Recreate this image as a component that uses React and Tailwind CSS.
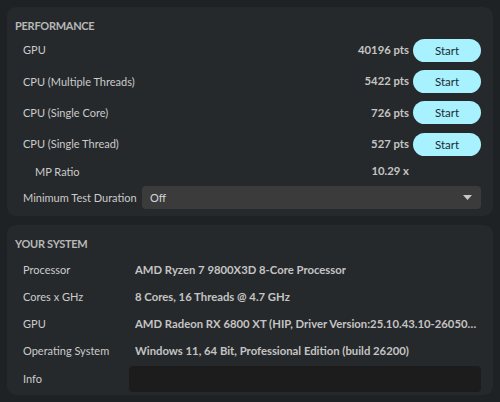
import React from "react";

const benchmarks = [
  { label: "GPU", score: "40196 pts" },
  { label: "CPU (Multiple Threads)", score: "5422 pts" },
  { label: "CPU (Single Core)", score: "726 pts" },
  { label: "CPU (Single Thread)", score: "527 pts" },
];

const system = [
  { label: "Processor", value: "AMD Ryzen 7 9800X3D 8-Core Processor" },
  { label: "Cores x GHz", value: "8 Cores, 16 Threads @ 4.7 GHz" },
  {
    label: "GPU",
    value: "AMD Radeon RX 6800 XT (HIP, Driver Version:25.10.43.10-2605061519)",
  },
  {
    label: "Operating System",
    value: "Windows 11, 64 Bit, Professional Edition (build 26200)",
  },
];

const SectionTitle = ({ children }) => (
  <h2 className="text-[11px] font-bold uppercase text-[#b8b8b8] tracking-tight leading-none">
    {children}
  </h2>
);

export default function App() {
  return (
    <div
      className="w-[500px] h-[402px] bg-[#1f2224] p-[7px] flex flex-col gap-[9px] text-[11px] text-[#cbcbcb]"
      style={{ fontFamily: "Lato, 'Noto Sans', sans-serif" }}
    >
      <section className="h-[209px] rounded-[9px] bg-[#26292b] pl-2 pr-3 pt-[13px]">
        <SectionTitle>Performance</SectionTitle>
        <div className="mt-[4px] flex flex-col">
          {benchmarks.map((b) => (
            <div key={b.label} className="flex items-center h-[31.2px] pl-2">
              <span className="flex-1 whitespace-nowrap">{b.label}</span>
              <span className="font-bold text-[11.3px] text-[#c4c4c4] mr-[4px]">{b.score}</span>
              <button className="w-[68px] h-[23px] rounded-full bg-[#a8f1ff] text-[#1e2a30] text-[11.5px]">
                Start
              </button>
            </div>
          ))}
          <div className="flex items-center h-[24px] pl-5">
            <span className="flex-1">MP Ratio</span>
            <span className="font-bold text-[11.3px] text-[#c4c4c4] mr-[72px]">10.29 x</span>
          </div>
          <div className="flex items-center h-[28px] pl-2">
            <span className="w-[119px] shrink-0 whitespace-nowrap">Minimum Test Duration</span>
            <div className="flex-1 h-[23px] rounded-[4px] bg-[#3b3b3b] flex items-center px-2">
              <span className="flex-1 text-[#d6d6d6]">Off</span>
              <svg width="9" height="5" viewBox="0 0 9 5" className="mr-[1px]">
                <path d="M0 0h9L4.5 5z" fill="#c8c8c8" />
              </svg>
            </div>
          </div>
        </div>
      </section>

      <section className="flex-1 rounded-[9px] bg-[#26292b] pl-2 pr-3 pt-[13px]">
        <SectionTitle>Your System</SectionTitle>
        <div className="mt-[8px] flex flex-col">
          {system.map((s) => (
            <div key={s.label} className="flex items-center h-[27px] pl-2">
              <span className="w-[112px] shrink-0">{s.label}</span>
              <span className="font-bold text-[11.3px] text-[#c4c4c4] truncate">{s.value}</span>
            </div>
          ))}
          <div className="flex items-center h-[28px] pl-2">
            <span className="w-[106px] shrink-0">Info</span>
            <div className="flex-1 h-[26px] rounded-[4px] bg-[#1c1c1c]" />
          </div>
        </div>
      </section>
    </div>
  );
}
